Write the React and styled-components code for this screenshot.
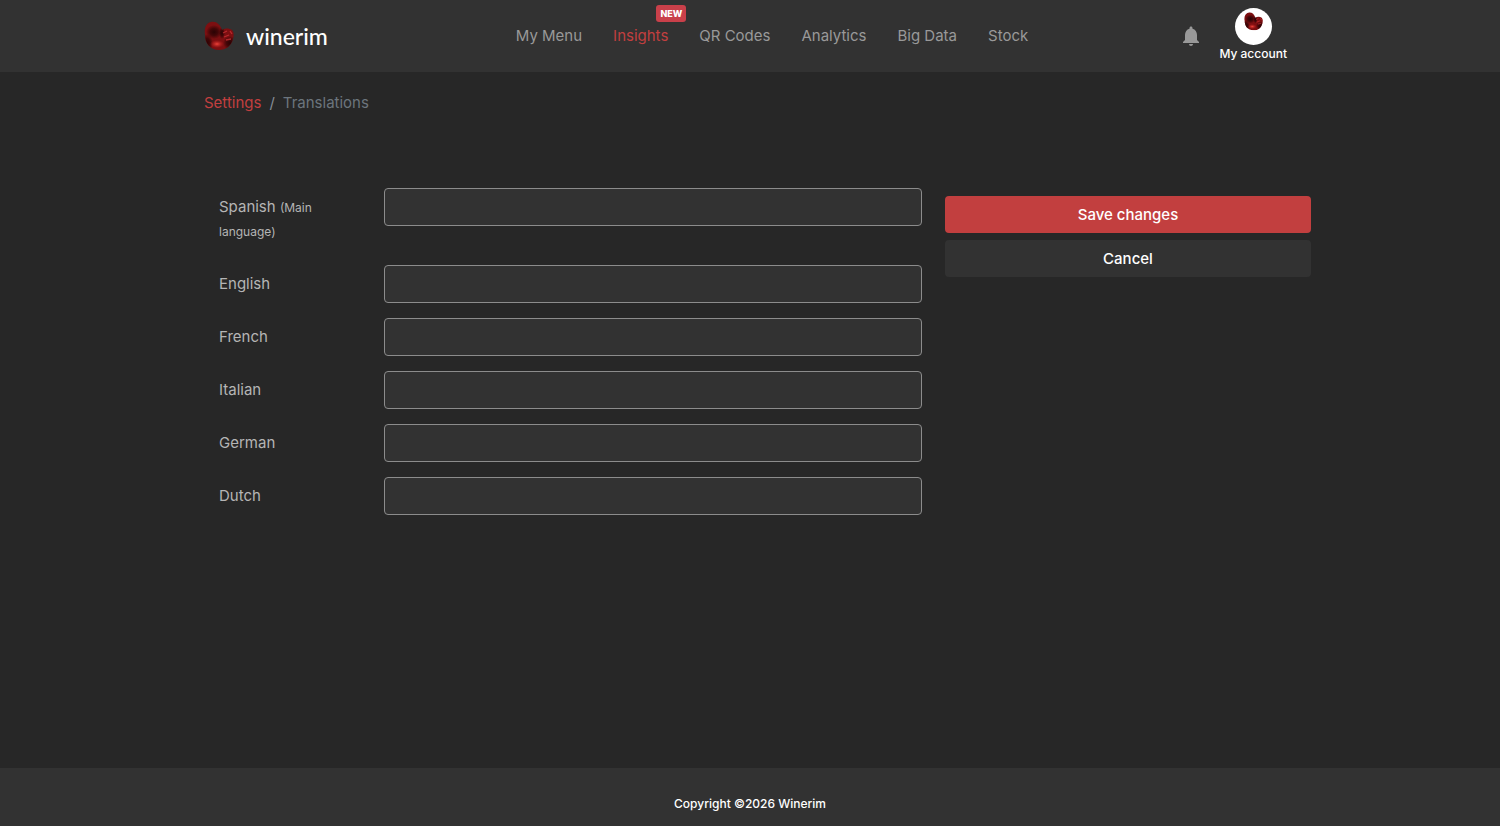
import React from 'react'
import styled, { createGlobalStyle, css } from 'styled-components'
import { MdNotifications } from 'react-icons/md'

const GlobalStyle = createGlobalStyle`
  *,
  *::before,
  *::after {
    box-sizing: border-box;
  }

  body {
    margin: 0;
    background: #272727;
    color: #fff;
    font-family: Inter, 'Liberation Sans', sans-serif;
    font-size: 15px;
    line-height: 24px;
  }

  a {
    text-decoration: none;
  }
`

const Page = styled.div`
  display: flex;
  flex-direction: column;
  min-height: 100vh;
`

const Container = styled.div`
  width: 100%;
  max-width: 1122px;
  margin: 0 auto;
  padding: 0 15px;
`

const Header = styled.header`
  background: #323232;
`

const HeaderRow = styled(Container)`
  display: grid;
  grid-template-columns: 1fr auto 1fr;
  align-items: center;
  height: 72px;
`

const Brand = styled.a`
  display: flex;
  align-items: center;
  gap: 12px;
  color: #fff;
  font-family: Lato, sans-serif;
  font-size: 23px;
  font-weight: 500;
`

const Nav = styled.nav`
  display: flex;
  gap: 31px;
  margin-left: 44px;
`

const NavLink = styled.a`
  position: relative;
  color: ${({ $active }) => ($active ? '#c23f3f' : '#999')};
`

const Badge = styled.span`
  position: absolute;
  right: -18px;
  bottom: 26px;
  padding: 0 4px;
  border-radius: 3px;
  background: #c9404a;
  color: #fff;
  font-size: 9px;
  font-weight: 800;
  line-height: 17px;
`

const Tools = styled.div`
  display: flex;
  align-items: center;
  justify-content: flex-end;
  gap: 16px;
  padding-right: 9px;
`

const BellButton = styled.button`
  display: flex;
  padding: 0;
  border: 0;
  background: none;
  color: #999;
`

const Account = styled.a`
  display: flex;
  flex-direction: column;
  align-items: center;
  padding-bottom: 2px;
  color: #fff;
  font-size: 12px;
  font-weight: 500;
  line-height: 18px;
`

const Avatar = styled.span`
  display: flex;
  justify-content: center;
  width: 37px;
  height: 37px;
  padding-top: 4px;
  border-radius: 50%;
  background: #fff;
`

const Main = styled.main`
  flex: 1;
`

const Breadcrumb = styled.ol`
  display: flex;
  gap: 8px;
  margin: 0;
  padding: 19px 0 73px;
  color: #6c757d;
  list-style: none;

  a {
    color: #c23f3f;
  }

  li + li::before {
    content: '/';
    padding-right: 8px;
    color: #868e96;
  }
`

const Form = styled.form`
  display: grid;
  grid-template-columns: 703fr 366fr;
  gap: 23px;
  margin-right: -15px;
  padding-left: 15px;
`

const Field = styled.div`
  display: grid;
  grid-template-columns: 135px 1fr;
  align-items: start;
  gap: 30px;
  margin-bottom: 15px;
`

const Label = styled.label`
  padding: 7px 0;
  color: #b5b5b5;

  small {
    font-size: 12px;
    line-height: 12px;
  }
`

const Input = styled.input`
  width: 100%;
  height: 38px;
  padding: 6px 12px;
  border: 1px solid #8c8c8c;
  border-radius: 4px;
  background: #323232;
  color: #fff;
  font: inherit;
`

const Actions = styled.div`
  display: flex;
  flex-direction: column;
  gap: 7px;
  padding-top: 8px;
`

const Button = styled.button`
  height: 37px;
  border: 0;
  border-radius: 4px;
  background: #323232;
  color: #fff;
  font: inherit;
  font-weight: 500;

  ${({ $primary }) =>
    $primary &&
    css`
      background: #c23f3f;
    `}
`

const Footer = styled.footer`
  padding: 24px 0 10px;
  background: #323232;
  font-size: 12px;
  font-weight: 500;
  text-align: center;
`

const Logo = ({ size, id }) => (
  <svg width={size} height={size} viewBox="0 0 30 30" aria-hidden="true">
    <defs>
      <clipPath id={`${id}-clip`}>
        <path d="M7 1C12 0 16 3 18 9c3-2 7-2 10 0 2 2 2 6 1 9-2 7-7 11-14 11C6 29 1 22 1 14 0 7 2 2 7 1z" />
      </clipPath>
      <radialGradient id={`${id}-shade`}>
        <stop offset="0" stopColor="#2a0304" />
        <stop offset="0.5" stopColor="#2a0304" stopOpacity="0.7" />
        <stop offset="1" stopColor="#2a0304" stopOpacity="0" />
      </radialGradient>
      <radialGradient id={`${id}-glow`}>
        <stop offset="0" stopColor="#f0443a" />
        <stop offset="1" stopColor="#c01c1c" stopOpacity="0" />
      </radialGradient>
    </defs>
    <g clipPath={`url(#${id}-clip)`}>
      <rect width="30" height="30" fill="#7d0f11" />
      <ellipse cx="10" cy="11" rx="8" ry="7" fill={`url(#${id}-shade)`} />
      <ellipse cx="3" cy="22" rx="6" ry="9" fill={`url(#${id}-shade)`} />
      <ellipse cx="26" cy="22" rx="7" ry="7" fill={`url(#${id}-shade)`} />
      <ellipse cx="18" cy="12" rx="3" ry="6" fill={`url(#${id}-shade)`} />
      <ellipse cx="13" cy="23" rx="7" ry="4" fill={`url(#${id}-glow)`} />
      <path
        d="M19 12l4-2M20 16l5-2M22 19l5-1M26 10l2 3"
        fill="none"
        stroke="#c92f33"
        strokeWidth="1.3"
        opacity="0.8"
      />
    </g>
  </svg>
)

const links = ['My Menu', 'Insights', 'QR Codes', 'Analytics', 'Big Data', 'Stock']

const languages = [
  { code: 'es', name: 'Spanish', main: true },
  { code: 'en', name: 'English' },
  { code: 'fr', name: 'French' },
  { code: 'it', name: 'Italian' },
  { code: 'de', name: 'German' },
  { code: 'nl', name: 'Dutch' },
]

export default () => {
  return (
    <Page>
      <GlobalStyle />
      <Header>
        <HeaderRow>
          <Brand href="#">
            <Logo size={30} id="brand" />
            winerim
          </Brand>
          <Nav>
            {links.map((link) => (
              <NavLink key={link} href="#" $active={link === 'Insights'}>
                {link}
                {link === 'Insights' && <Badge>NEW</Badge>}
              </NavLink>
            ))}
          </Nav>
          <Tools>
            <BellButton type="button" aria-label="Notifications">
              <MdNotifications size={24} />
            </BellButton>
            <Account href="#">
              <Avatar>
                <Logo size={19} id="avatar" />
              </Avatar>
              My account
            </Account>
          </Tools>
        </HeaderRow>
      </Header>
      <Main>
        <Container>
          <Breadcrumb>
            <li>
              <a href="#">Settings</a>
            </li>
            <li>Translations</li>
          </Breadcrumb>
          <Form>
            <div>
              {languages.map(({ code, name, main }) => (
                <Field key={code}>
                  <Label htmlFor={code}>
                    {name} {main && <small>(Main language)</small>}
                  </Label>
                  <Input id={code} type="text" />
                </Field>
              ))}
            </div>
            <Actions>
              <Button type="submit" $primary>
                Save changes
              </Button>
              <Button type="button">Cancel</Button>
            </Actions>
          </Form>
        </Container>
      </Main>
      <Footer>Copyright ©2026 Winerim</Footer>
    </Page>
  )
}
